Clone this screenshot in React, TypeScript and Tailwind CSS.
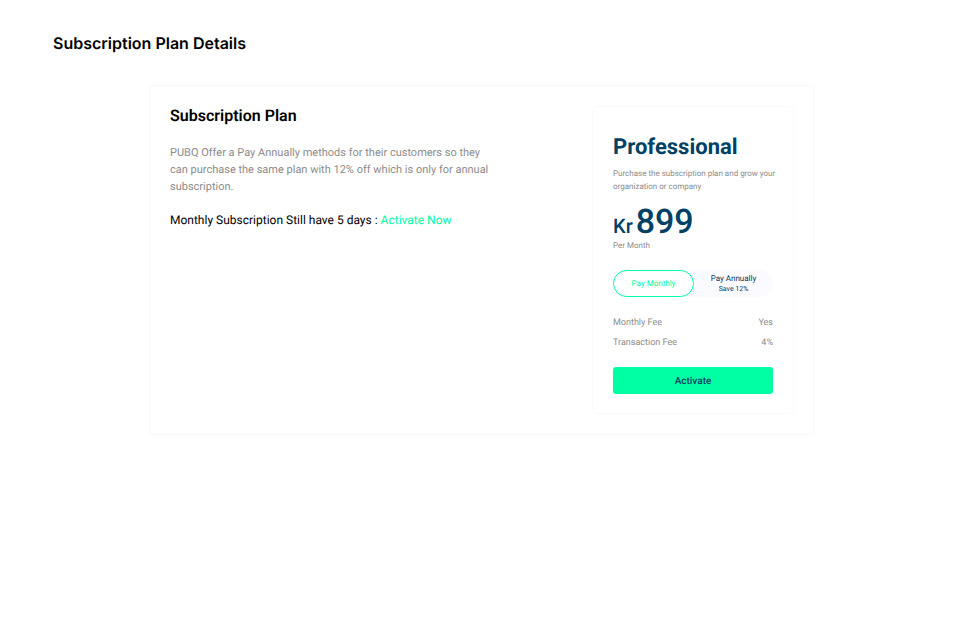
export default function App() {
  return (
    <main className="min-h-screen bg-white px-[53px] pt-[31px] font-['Roboto',sans-serif] [text-rendering:geometricPrecision]">
      <h1 className="font-['Inter',sans-serif] text-base leading-6 font-semibold text-black">Subscription Plan Details</h1>
      <section className="mx-auto mt-[30px] flex w-full max-w-[665px] items-start justify-between rounded border border-[#f8f8f8] py-5 pr-[19px] pl-5">
        <div className="w-[320px]">
          <h2 className="text-base leading-5 font-semibold text-black">Subscription Plan</h2>
          <p className="mt-[18px] text-[11px] leading-[17px] text-[#8c8c8c]">
            PUBQ Offer a Pay Annually methods for their customers so they can purchase the same plan with 12% off which is only for annual subscription.
          </p>
          <p className="mt-[15px] text-xs leading-5 text-black">
            Monthly Subscription Still have 5 days : <a href="#activate" className="text-[#00ffa3]">Activate Now</a>
          </p>
        </div>
        <article className="w-[202px] rounded border border-[#fafafa] px-5 pt-5 pb-[19px]">
          <h3 className="mt-[5px] text-[22px] leading-8 font-bold text-[#004165]">Professional</h3>
          <p className="mt-[3px] text-[8px] leading-[13px] whitespace-nowrap text-[#8c8c8c]">
            Purchase the subscription plan and grow your<br />organization or company
          </p>
          <p className="mt-[10px] flex items-baseline gap-[3px] font-medium text-[#004165]">
            <span className="text-xl leading-5">Kr</span><span className="text-[34px] leading-[38px]">899</span>
          </p>
          <p className="text-[8px] leading-[10px] text-[#8c8c8c]">Per Month</p>
          <div className="mt-[19px] flex h-[27px] rounded-full bg-[#fafaff]">
            <button type="button" className="flex-1 rounded-full border border-[#00ffa3] bg-white text-[8px] text-[#00ffa3] [text-rendering:geometricPrecision]">Pay Monthly</button>
            <button type="button" className="flex flex-1 flex-col items-center justify-center text-[8px] leading-[10px] text-[#004165] [text-rendering:geometricPrecision]">
              <span>Pay Annually</span><span className="text-[7px]">Save 12%</span>
            </button>
          </div>
          <dl className="mt-4 text-[9px] leading-5 text-[#8c8c8c]">
            <div className="flex justify-between"><dt>Monthly Fee</dt><dd>Yes</dd></div>
            <div className="flex justify-between"><dt>Transaction Fee</dt><dd>4%</dd></div>
          </dl>
          <button type="button" className="mt-[14px] block h-[27px] w-full rounded-[3px] bg-[#00ffa3] pt-px text-[10px] font-medium text-[#004165] [text-rendering:geometricPrecision]">Activate</button>
        </article>
      </section>
    </main>
  );
}
